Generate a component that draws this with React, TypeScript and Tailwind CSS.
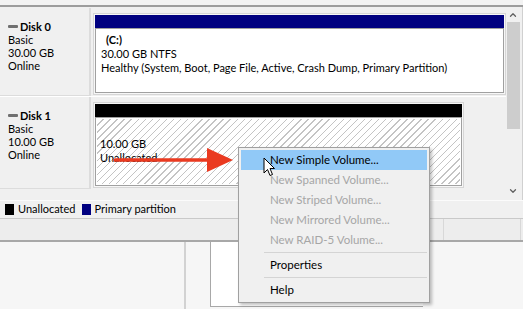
import { ChevronUp, ChevronDown } from "lucide-react";

function DiskLabel({ name, size }: { name: string; size: string }) {
  return (
    <div className="w-[91px] shrink-0 border-r-2 border-b border-[#dcdcdc] bg-[#f0f0f0] pl-[8px] pt-[12px] leading-[13px]">
      <div className="flex items-center gap-[2px] font-bold">
        <span className="inline-block w-[10px] h-[3px] rounded-[1px] bg-[#707070]" />
        <span>{name}</span>
      </div>
      <div>Basic</div>
      <div>{size}</div>
      <div>Online</div>
    </div>
  );
}

function MenuItem({ label, active, disabled }: { label: string; active?: boolean; disabled?: boolean }) {
  return (
    <div
      className={
        "h-[20px] flex items-center pl-[29px] " +
        (active ? "bg-[#91c9f7] " : "") +
        (disabled ? "text-[#a6a6a6]" : "text-black")
      }
    >
      {label}
    </div>
  );
}

function MenuSeparator() {
  return (
    <div className="h-[5px] flex items-center pl-[23px]">
      <div className="h-px w-full bg-[#d4d4d4]" />
    </div>
  );
}

export default function App() {
  return (
    <div className="relative w-[523px] h-[309px] overflow-hidden bg-[#f0f0f0] text-[11px] text-black font-['Lato',sans-serif]">
      {/* top strip */}
      <div className="h-[5px] bg-[#f3f3f3]" />
      <div className="h-[2px] bg-[#9d9d9d]" />

      {/* disk list */}
      <div className="flex h-[193px]">
        <div className="flex-1 flex flex-col pt-[1px]">
          {/* Disk 0 */}
          <div className="flex h-[88px]">
            <DiskLabel name="Disk 0" size="30.00 GB" />
            <div className="flex-1 pl-[2px] pt-[5px] pb-[1px]">
              <div className="h-full border border-[#d6d6d6] bg-[#f7f7f7] p-[1px] flex flex-col">
                <div className="h-[13px] bg-[#000080]" />
                <div className="flex-1 border border-[#a0a0a0] bg-white px-[5px] pt-[4px] leading-[14px]">
                  <div className="font-bold pl-[5px]">(C:)</div>
                  <div>30.00 GB NTFS</div>
                  <div>Healthy (System, Boot, Page File, Active, Crash Dump, Primary Partition)</div>
                </div>
              </div>
            </div>
          </div>
          <div className="h-px bg-white" />
          {/* Disk 1 */}
          <div className="flex h-[92px]">
            <DiskLabel name="Disk 1" size="10.00 GB" />
            <div className="pl-[2px] pt-[5px] pb-[1px] w-[373px]">
              <div className="h-full border border-[#d6d6d6] bg-[#f7f7f7] p-[1px] flex flex-col">
                <div className="h-[13px] bg-black" />
                <div className="flex-1 border border-[#a0a0a0] p-[1px] bg-white">
                  <div className="h-full px-[3px] pt-[18px] leading-[14px] bg-[repeating-linear-gradient(135deg,#ffffff_0px,#ffffff_4px,#c4c4c4_4px,#c4c4c4_5px)]">
                    <div>10.00 GB</div>
                    <div>Unallocated</div>
                  </div>
                </div>
              </div>
            </div>
          </div>
        </div>

        {/* scrollbar */}
        <div className="w-[17px] shrink-0 flex flex-col items-center pr-[2px] border-r border-[#d0d0d0]">
          <div className="h-[15px] flex items-center justify-center text-[#606060]">
            <ChevronUp size={10} strokeWidth={3} />
          </div>
          <div className="w-[13px] h-[107px] bg-[#cdcdcd]" />
          <div className="flex-1" />
          <div className="h-[15px] mb-[2px] flex items-center justify-center text-[#606060]">
            <ChevronDown size={10} strokeWidth={3} />
          </div>
        </div>
      </div>

      {/* legend */}
      <div className="h-[18px] border-t border-[#fbfbfb] flex items-center pl-[5px] gap-[4px]">
        <span className="w-[9px] h-[11px] bg-black" />
        <span>Unallocated</span>
        <span className="w-[9px] h-[11px] bg-[#000080] ml-[2px]" />
        <span>Primary partition</span>
      </div>

      {/* status bar */}
      <div className="h-[24px] flex border-t border-[#c9c9c9] border-b-2 border-b-[#a8a8a8] bg-[#ededed]">
        <div className="w-[444px] border-r border-[#d8d8d8]" />
        <div className="flex-1 mr-[2px] border-r border-[#d8d8d8]" />
      </div>

      {/* lower pane */}
      <div className="flex h-[67px] bg-[#f6f6f6]">
        <div className="w-[186px] border-r-2 border-[#d2d2d2]" />
        <div className="ml-[24px] w-[213px] h-[65px] bg-white border-l border-b border-[#a8a8a8]" />
      </div>

      {/* red arrow */}
      <svg className="absolute left-[112px] top-[146px]" width="124" height="28" viewBox="0 0 124 28">
        <line x1="3" y1="14" x2="98" y2="14" stroke="#ea3a20" strokeWidth="3.5" strokeLinecap="round" />
        <polygon points="95,2 121,14 95,26" fill="#ea3a20" />
      </svg>

      {/* context menu */}
      <div className="absolute left-[238px] top-[147px] w-[192px] border border-[#a0a0a0] bg-[#f0f0f0] p-[2px] text-[11.5px] shadow-[2px_2px_3px_rgba(0,0,0,0.25)]">
        <MenuItem label="New Simple Volume..." active />
        <MenuItem label="New Spanned Volume..." disabled />
        <MenuItem label="New Striped Volume..." disabled />
        <MenuItem label="New Mirrored Volume..." disabled />
        <MenuItem label="New RAID-5 Volume..." disabled />
        <MenuSeparator />
        <MenuItem label="Properties" />
        <MenuSeparator />
        <MenuItem label="Help" />
      </div>

      {/* mouse cursor */}
      <svg className="absolute left-[263px] top-[157px]" width="13" height="20" viewBox="0 0 13 20">
        <path d="M1 1 L1 16 L4.5 12.5 L7 18.5 L9.5 17.5 L7 11.5 L11.5 11.5 Z" fill="#ffffff" stroke="#000000" strokeWidth="1" strokeLinejoin="round" />
      </svg>
    </div>
  );
}
